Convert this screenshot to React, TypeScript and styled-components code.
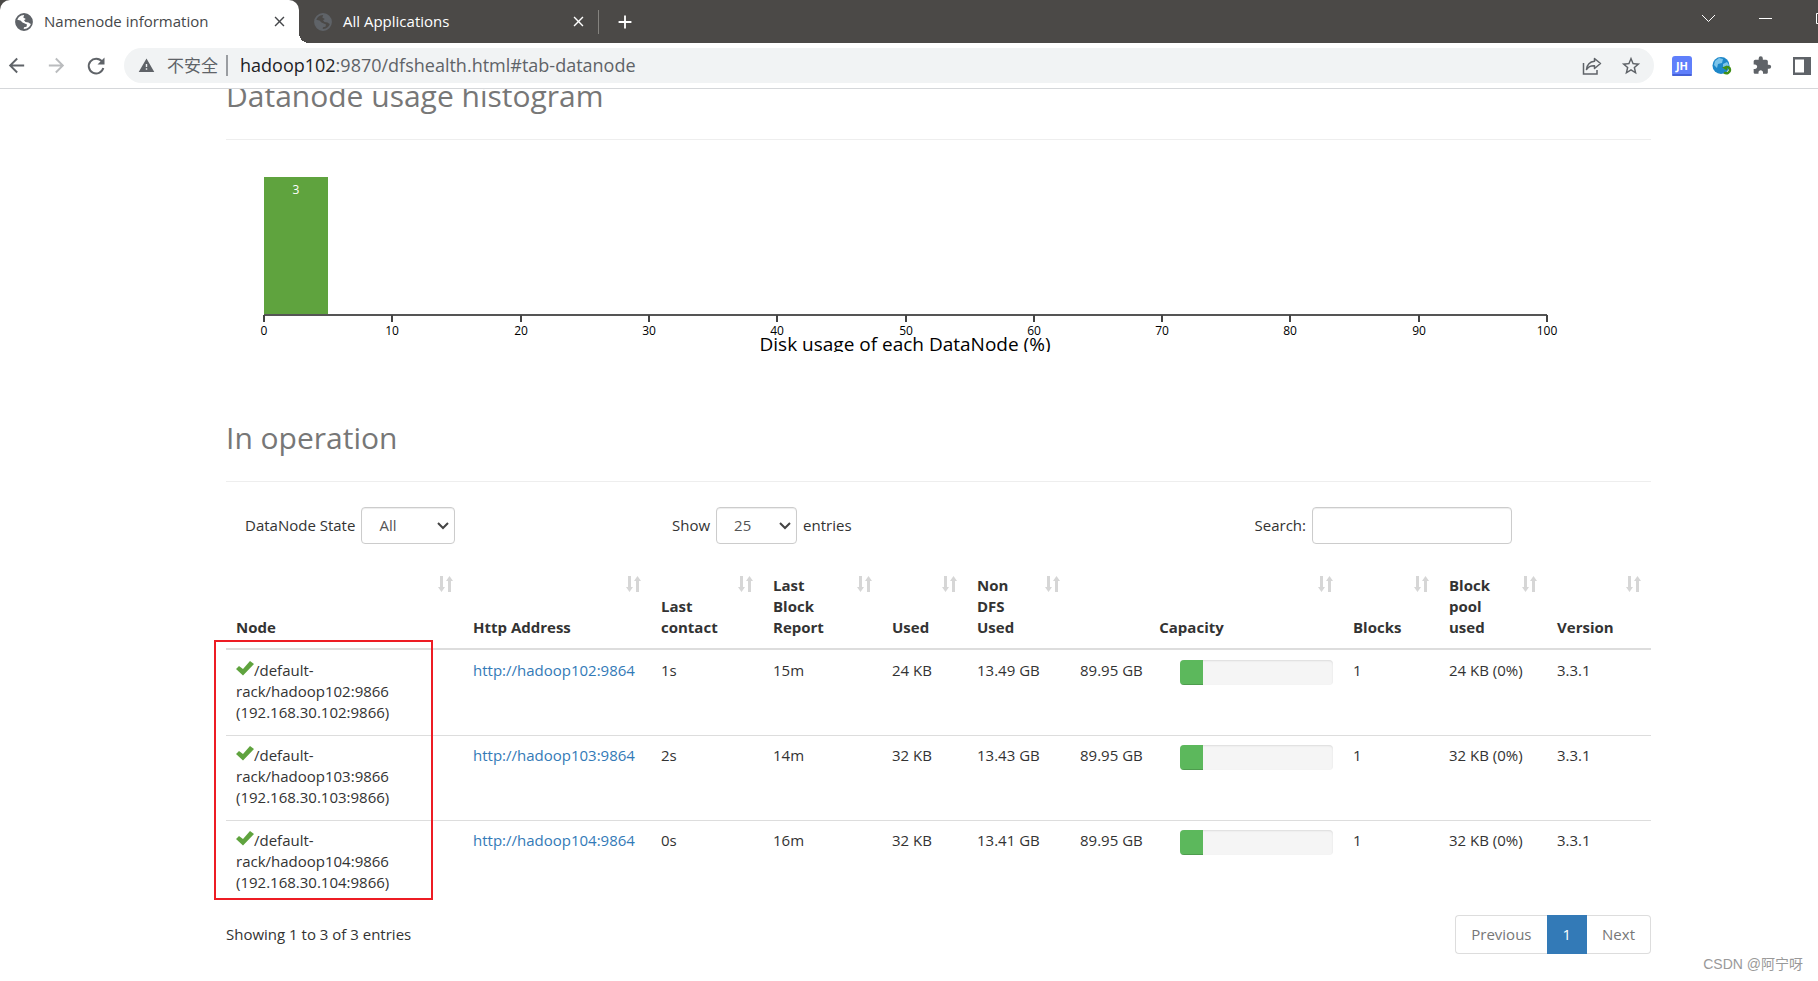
import React from 'react';
import styled, { createGlobalStyle } from 'styled-components';
import { MdExtension, MdStarBorder, MdWarning, MdClose, MdAdd, MdArrowBack, MdArrowForward } from 'react-icons/md';

const Global = createGlobalStyle`
  * { box-sizing: border-box; }
  html, body { margin: 0; background: #fff; }
  body {
    font-family: "Open Sans", "Noto Sans", "Noto Sans CJK SC", sans-serif;
    font-size: 15px;
    line-height: 21px;
    color: #333;
  }
  button, input, select { font: inherit; }
`;

const Window = styled.div`
  position: relative;
  display: flex;
  flex-direction: column;
  min-height: 100vh;
  overflow: hidden;
`;

const TabStrip = styled.div`
  display: flex;
  height: 43px;
  background: #4b4947;
  color: #fff;
`;

const Tab = styled.div<{ $active?: boolean }>`
  position: relative;
  display: flex;
  align-items: center;
  width: 299px;
  padding: 0 10px 0 15px;
  gap: 11px;
  border-radius: 10px 10px 0 0;
  color: ${p => (p.$active ? '#45474a' : '#fff')};
  background: ${p => (p.$active ? '#fff' : 'transparent')};

  ${p => p.$active && `
    &::after {
      content: '';
      position: absolute;
      left: 100%;
      bottom: 0;
      width: 10px;
      height: 10px;
      background: radial-gradient(circle at 100% 0, transparent 10px, #fff 10px);
    }
  `}
`;

const TabTitle = styled.span`
  flex: 1;
`;

const IconButton = styled.button<{ $size: number; $color?: string }>`
  display: inline-flex;
  align-items: center;
  justify-content: center;
  flex: none;
  padding: 0;
  border: 0;
  background: none;
  width: ${p => p.$size}px;
  height: ${p => p.$size}px;
  color: ${p => p.$color || 'inherit'};
`;

const NewTab = styled.div`
  display: flex;
  align-items: center;
  gap: 15px;
  &::before {
    content: '';
    width: 1px;
    height: 24px;
    background: #85837f;
  }
`;

const WindowControls = styled.div`
  display: flex;
  align-items: center;
  gap: 44px;
  height: 37px;
  margin: 0 -11px 0 auto;
`;

const Toolbar = styled.div`
  display: flex;
  align-items: center;
  gap: 16px;
  height: 46px;
  padding: 0 6px 0 4px;
  border-bottom: 1px solid #d5d7da;
  color: #5f6368;
`;

const Omnibox = styled.div`
  display: flex;
  flex: 1;
  align-items: center;
  height: 35px;
  gap: 12px;
  padding: 0 12px 0 14px;
  border-radius: 18px;
  background: #f1f3f4;
`;

const Security = styled.span`
  padding-right: 8px;
  border-right: 2px solid #9a9da1;
  font-size: 17px;
`;

const Url = styled.span`
  flex: 1;
  font-size: 18px;
  b { font-weight: 400; color: #202124; }
`;

const PageActions = styled.div`
  display: flex;
  align-items: center;
  gap: 18px;
`;

const Extensions = styled.div`
  display: flex;
  align-items: center;
  gap: 20px;
  padding-left: 2px;
`;

const Viewport = styled.main`
  flex: 1;
  overflow: hidden;
  padding: 0 167px 0 226px;
`;

const Heading = styled.h2<{ $first?: boolean }>`
  margin: ${p => (p.$first ? '-15px' : '64px')} 0 0;
  padding-bottom: 21px;
  border-bottom: 1px solid #eee;
  font-size: 30px;
  font-weight: 400;
  line-height: 44px;
  color: #777;
`;

const Chart = styled.svg`
  display: block;
  width: 100%;
  margin-top: 20px;
  overflow: hidden;
  text { text-anchor: middle; font-size: 12px; }
  .title { font-size: 19px; }
`;

const Controls = styled.div`
  display: grid;
  grid-template-columns: 427fr 420fr 420fr;
  align-items: center;
  padding: 25px 139px 0 19px;
`;

const Field = styled.label<{ $end?: boolean }>`
  display: flex;
  align-items: center;
  justify-content: ${p => (p.$end ? 'flex-end' : 'flex-start')};
  gap: 6px;
`;

const SelectBox = styled.span`
  position: relative;
  display: inline-flex;
  svg { position: absolute; right: 5px; top: 15px; pointer-events: none; }
`;

const Select = styled.select<{ $width: number }>`
  appearance: none;
  width: ${p => p.$width}px;
  height: 37px;
  padding: 0 17px;
  border: 1px solid #ccc;
  border-radius: 4px;
  background: #fff;
  color: #555;
  box-shadow: inset 0 1px 1px rgba(0, 0, 0, 0.075);
`;

const SearchInput = styled.input`
  width: 200px;
  height: 37px;
  padding: 0 10px;
  border: 1px solid #ccc;
  border-radius: 4px;
  box-shadow: inset 0 1px 1px rgba(0, 0, 0, 0.075);
`;

const TableArea = styled.div`
  position: relative;
  margin-top: 22px;
`;

const Highlight = styled.div`
  position: absolute;
  left: -12px;
  top: 74px;
  width: 219px;
  height: 260px;
  border: 2px solid #ed1c24;
  pointer-events: none;
`;

const Table = styled.table`
  width: 100%;
  table-layout: fixed;
  border-spacing: 0;
`;

const Col = styled.col<{ $width: number }>`
  width: ${p => p.$width}px;
`;

const HeadCell = styled.th<{ $center?: boolean }>`
  position: relative;
  height: 84px;
  padding: 9px 40px 10px 10px;
  border-bottom: 2px solid #ddd;
  vertical-align: bottom;
  text-align: ${p => (p.$center ? 'center' : 'left')};
  font-weight: 700;
  svg { position: absolute; right: 10px; top: 10px; }
`;

const Cell = styled.td`
  padding: 9px 10px 12px;
  border-top: 1px solid #ddd;
  vertical-align: top;
  white-space: nowrap;
  tr:first-child > & { border-top-color: transparent; }
`;

const NodeCell = styled(Cell)`
  white-space: normal;
`;

const Link = styled.a`
  color: #337ab7;
  text-decoration: none;
`;

const Progress = styled.div`
  height: 25px;
  overflow: hidden;
  border-radius: 4px;
  background: #f5f5f5;
  box-shadow: inset 0 1px 2px rgba(0, 0, 0, 0.1);
`;

const ProgressBar = styled.div`
  height: 100%;
  background: #5cb85c;
  box-shadow: inset 0 -1px 0 rgba(0, 0, 0, 0.15);
`;

const Footer = styled.div`
  display: flex;
  align-items: center;
  justify-content: space-between;
  margin-top: 10px;
`;

const Pagination = styled.nav`
  display: flex;
`;

const PageButton = styled.button<{ $active?: boolean }>`
  height: 39px;
  padding: 0 15px;
  border: 1px solid ${p => (p.$active ? '#337ab7' : '#ddd')};
  background: ${p => (p.$active ? '#337ab7' : '#fff')};
  color: ${p => (p.$active ? '#fff' : '#777')};
  &:first-child { border-right: 0; border-radius: 4px 0 0 4px; }
  &:last-child { border-left: 0; border-radius: 0 4px 4px 0; }
`;

const Watermark = styled.div`
  position: absolute;
  right: 15px;
  bottom: 6px;
  color: #999;
  font-family: "Liberation Sans", "Noto Sans CJK SC", sans-serif;
  font-size: 14px;
`;

const GlobeIcon = () => (
  <svg width="18" height="18" viewBox="0 0 18 18" fill="#5f6368" aria-hidden="true">
    <circle cx="9" cy="9" r="8" fill="none" stroke="#5f6368" strokeWidth="1.8" />
    <path d="M9.500 1L13 1.500 16 4.500 17 9 15.500 11 13.500 9.500 10.500 9 9 7.300 10.800 6 8.300 4.600zM1 6.500L5.500 7.500 7.500 9.500 12 11.500 11.500 13.800 9 14.200 8.500 17 4 15.500 1 11z" />
  </svg>
);

const ReloadIcon = () => (
  <svg width="20" height="20" viewBox="0 0 20 20" aria-hidden="true">
    <path d="M16 5.500A7.400 7.400 0 1 0 17.300 12" fill="none" stroke="currentColor" strokeWidth="2" />
    <path d="M18.500 1.500v7h-7z" fill="currentColor" />
  </svg>
);

const ShareIcon = () => (
  <svg width="20" height="20" viewBox="0 0 20 20" fill="none" stroke="currentColor" strokeWidth="1.5" aria-hidden="true">
    <path d="M1.500 7v11h13.500v-4" />
    <path d="M12.500 2.500L18.500 7.500 12.500 12.500V9.800C9 9.600 6.500 10.500 4.500 13.500 5 9 7.500 5.700 12.500 5.200z" strokeLinejoin="round" />
  </svg>
);

const JhIcon = () => (
  <svg width="20" height="20" viewBox="0 0 20 20" aria-hidden="true">
    <rect width="20" height="20" rx="3" fill="#5f7ffb" />
    <rect y="18" width="20" height="2" rx="1" fill="#4461d8" />
    <text x="10" y="14" textAnchor="middle" fontSize="11" fontWeight="700" fill="#fff">JH</text>
  </svg>
);

const EarthIcon = () => (
  <svg width="20" height="20" viewBox="0 0 20 20" aria-hidden="true">
    <circle cx="9" cy="9.500" r="8.500" fill="#1d87c9" />
    <path d="M3 5l4-3 4 1-1 4-4 1-1 4-3-3zM11 8l4-2 2 3-3 4-3-1z" fill="#7cc4ea" />
    <path d="M12 16.500c3 2 6 0 6-2.500s-2-3.500-4-2.500" fill="none" stroke="#3f8f16" strokeWidth="2.500" />
    <path d="M10 11.500l5-2v5z" fill="#3f8f16" />
  </svg>
);

const SidePanelIcon = () => (
  <svg width="20" height="20" viewBox="0 0 20 20" aria-hidden="true">
    <path d="M1 1h18v18H1zM3 3.500v13h9v-13z" fill="currentColor" fillRule="evenodd" />
  </svg>
);

const ControlGlyph = ({ d }: { d: string }) => (
  <svg width="13" height="13" viewBox="0 0 13 13" fill="none" stroke="#fff" aria-hidden="true">
    <path d={d} />
  </svg>
);

const CheckIcon = () => (
  <svg width="18" height="15" viewBox="0 0 18 15" aria-hidden="true">
    <path d="M0 8l3-3 4 3L14 0l4 3L7 14.500z" fill="#5fa33e" />
  </svg>
);

const SortIcon = () => (
  <svg width="15" height="16" viewBox="0 0 15 16" fill="#d6d6d6" aria-hidden="true">
    <path d="M2 0h3v11h2l-3.500 5L0 11h2zM10 16h3V5h2l-3.500-5L8 5h2z" />
  </svg>
);

const Chevron = () => (
  <svg width="14" height="9" viewBox="0 0 14 9" fill="none" stroke="#444" strokeWidth="2" aria-hidden="true">
    <path d="M2 1l5 5 5-5" />
  </svg>
);

const TICKS = [0, 10, 20, 30, 40, 50, 60, 70, 80, 90, 100];
const tickX = (t: number) => 38 + Math.round((t * 1283) / 100);

const COLUMNS = [237, 188, 112, 119, 85, 103, 100, 173, 96, 108, 104];

const HEADERS = [
  { label: 'Node' },
  { label: 'Http Address' },
  { label: 'Last contact' },
  { label: 'Last Block Report' },
  { label: 'Used' },
  { label: 'Non DFS Used' },
  { label: 'Capacity', span: 2 },
  { label: 'Blocks' },
  { label: 'Block pool used' },
  { label: 'Version' },
];

const NODES = [
  { id: '102', contact: '1s', report: '15m', used: '24 KB', nonDfs: '13.49 GB', percent: 15 },
  { id: '103', contact: '2s', report: '14m', used: '32 KB', nonDfs: '13.43 GB', percent: 15 },
  { id: '104', contact: '0s', report: '16m', used: '32 KB', nonDfs: '13.41 GB', percent: 15 },
];

export default function App() {
  return (
    <Window>
      <Global />
      <TabStrip>
        <Tab $active>
          <GlobeIcon />
          <TabTitle>Namenode information</TabTitle>
          <IconButton $size={20} aria-label="Close tab"><MdClose size={17} /></IconButton>
        </Tab>
        <Tab>
          <GlobeIcon />
          <TabTitle>All Applications</TabTitle>
          <IconButton $size={20} aria-label="Close tab"><MdClose size={17} /></IconButton>
        </Tab>
        <NewTab>
          <IconButton $size={22} aria-label="New tab"><MdAdd size={22} /></IconButton>
        </NewTab>
        <WindowControls>
          <IconButton $size={13} aria-label="Search tabs"><ControlGlyph d="M0 3l6.500 6.500L13 3" /></IconButton>
          <IconButton $size={13} aria-label="Minimize"><ControlGlyph d="M0 6.500h13" /></IconButton>
          <IconButton $size={13} aria-label="Maximize"><ControlGlyph d="M.5 1.500h11v10H.5z" /></IconButton>
        </WindowControls>
      </TabStrip>
      <Toolbar>
        <IconButton $size={24} aria-label="Back"><MdArrowBack size={23} /></IconButton>
        <IconButton $size={24} $color="#babcbe" aria-label="Forward"><MdArrowForward size={23} /></IconButton>
        <IconButton $size={24} aria-label="Reload"><ReloadIcon /></IconButton>
        <Omnibox>
          <MdWarning size={17} />
          <Security>不安全</Security>
          <Url><b>hadoop102</b>:9870/dfshealth.html#tab-datanode</Url>
          <PageActions>
            <IconButton $size={20} aria-label="Share"><ShareIcon /></IconButton>
            <IconButton $size={22} aria-label="Bookmark"><MdStarBorder size={22} /></IconButton>
          </PageActions>
        </Omnibox>
        <Extensions>
          <IconButton $size={20} aria-label="JH extension"><JhIcon /></IconButton>
          <IconButton $size={20} aria-label="Web extension"><EarthIcon /></IconButton>
          <IconButton $size={20} aria-label="Extensions"><MdExtension size={21} /></IconButton>
          <IconButton $size={20} aria-label="Side panel"><SidePanelIcon /></IconButton>
        </Extensions>
      </Toolbar>
      <Viewport>
        <Heading $first>Datanode usage histogram</Heading>
        <Chart viewBox="0 0 1425 192">
          <rect x="38" y="17" width="64" height="138" fill="#5fa33e" />
          <text x="70" y="34" fill="#fff">3</text>
          <path d="M38 155H1321" stroke="#555" strokeWidth="2" />
          {TICKS.map(t => (
            <g key={t}>
              <path d={`M${tickX(t)} 155v7`} stroke="#444" strokeWidth="2" />
              <text x={tickX(t)} y="175">{t}</text>
            </g>
          ))}
          <text className="title" x="679" y="191">Disk usage of each DataNode (%)</text>
        </Chart>
        <Heading>In operation</Heading>
        <Controls>
          <Field>
            DataNode State
            <SelectBox><Select $width={94}><option>All</option></Select><Chevron /></SelectBox>
          </Field>
          <Field>
            Show
            <SelectBox><Select $width={81}><option>25</option></Select><Chevron /></SelectBox>
            entries
          </Field>
          <Field $end>
            Search:
            <SearchInput type="search" />
          </Field>
        </Controls>
        <TableArea>
          <Table>
            <colgroup>{COLUMNS.map((w, i) => <Col key={i} $width={w} />)}</colgroup>
            <thead>
              <tr>
                {HEADERS.map(h => (
                  <HeadCell key={h.label} colSpan={h.span} $center={!!h.span}>{h.label}<SortIcon /></HeadCell>
                ))}
              </tr>
            </thead>
            <tbody>
              {NODES.map(n => (
                <tr key={n.id}>
                  <NodeCell><CheckIcon />{`/default-rack/hadoop${n.id}:9866 (192.168.30.${n.id}:9866)`}</NodeCell>
                  <Cell><Link href={`http://hadoop${n.id}:9864`}>{`http://hadoop${n.id}:9864`}</Link></Cell>
                  <Cell>{n.contact}</Cell>
                  <Cell>{n.report}</Cell>
                  <Cell>{n.used}</Cell>
                  <Cell>{n.nonDfs}</Cell>
                  <Cell>89.95 GB</Cell>
                  <Cell><Progress><ProgressBar style={{ width: `${n.percent}%` }} /></Progress></Cell>
                  <Cell>1</Cell>
                  <Cell>{`${n.used} (0%)`}</Cell>
                  <Cell>3.3.1</Cell>
                </tr>
              ))}
            </tbody>
          </Table>
          <Highlight />
        </TableArea>
        <Footer>
          <span>Showing 1 to 3 of 3 entries</span>
          <Pagination>
            <PageButton>Previous</PageButton>
            <PageButton $active>1</PageButton>
            <PageButton>Next</PageButton>
          </Pagination>
        </Footer>
      </Viewport>
      <Watermark>CSDN @阿宁呀</Watermark>
    </Window>
  );
}
